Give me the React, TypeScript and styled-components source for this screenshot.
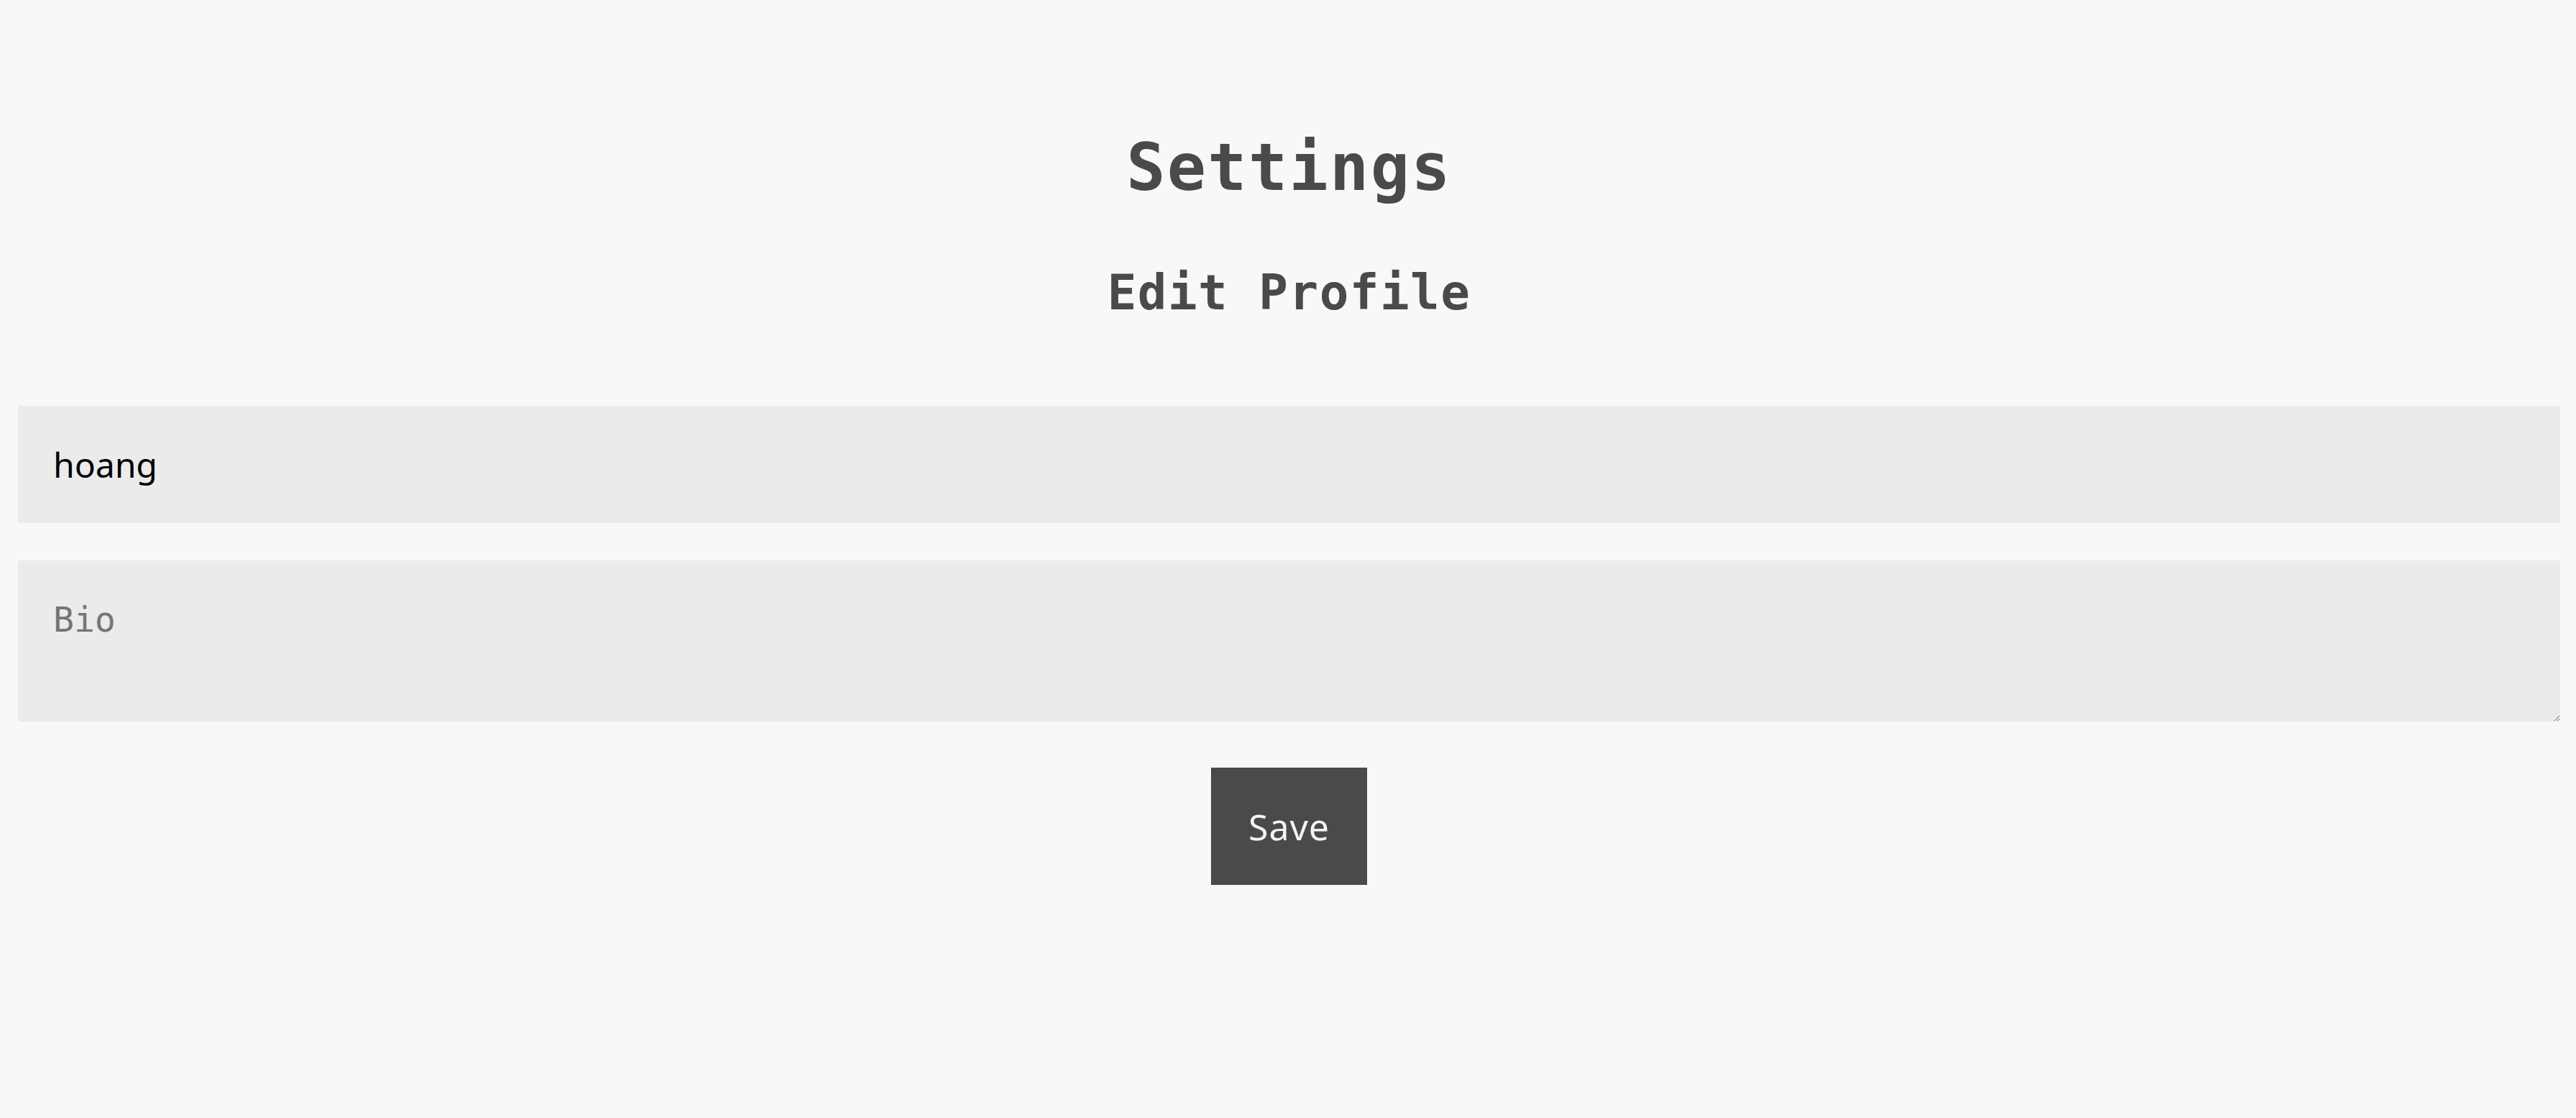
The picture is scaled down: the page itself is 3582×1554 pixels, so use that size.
import React, { useState } from "react";
import styled, { createGlobalStyle } from "styled-components";

const GlobalStyle = createGlobalStyle`
  html, body {
    margin: 0;
    padding: 0;
    background: #f8f8f8;
  }
  * { box-sizing: border-box; }
`;

const Page = styled.main`
  min-height: 1554px;
  background: #f8f8f8;
  padding: 180px 22px 0 25px;
  display: flex;
  flex-direction: column;
  align-items: stretch;
`;

const Title = styled.h1`
  margin: 0;
  text-align: center;
  font-family: "DejaVu Sans Mono", "Liberation Mono", monospace;
  font-weight: 700;
  font-size: 90px;
  line-height: 105px;
  letter-spacing: 2.4px;
  color: #4a4a4a;
`;

const Subtitle = styled.h2`
  margin: 82px 0 0;
  text-align: center;
  font-family: "DejaVu Sans Mono", "Liberation Mono", monospace;
  font-weight: 700;
  font-size: 67.5px;
  line-height: 79px;
  letter-spacing: 1.5px;
  color: #4a4a4a;
`;

const Form = styled.form`
  margin-top: 118px;
  display: flex;
  flex-direction: column;
  align-items: stretch;
`;

const TextInput = styled.input`
  height: 163px;
  border: none;
  outline: none;
  background: #ebebeb;
  padding: 0 49px;
  font-family: "Noto Sans", "Open Sans", sans-serif;
  font-size: 48px;
  color: #000;
`;

const BioArea = styled.textarea`
  margin-top: 52px;
  height: 224px;
  border: none;
  outline: none;
  background: #ebebeb;
  padding: 49px;
  font-family: "DejaVu Sans Mono", monospace;
  font-size: 48px;
  line-height: 67px;
  color: #000;
  &::placeholder {
    color: #757575;
  }
`;

const SaveButton = styled.button`
  align-self: center;
  margin-top: 64px;
  height: 163px;
  width: 217px;
  padding: 0;
  border: none;
  background: #4a4a4a;
  color: #f3f3f3;
  font-family: "Noto Sans", "Open Sans", sans-serif;
  font-size: 50px;
  letter-spacing: 1px;
  cursor: pointer;
`;

export default function App() {
  const [name, setName] = useState("hoang");
  const [bio, setBio] = useState("");
  return (
    <>
      <GlobalStyle />
      <Page>
        <Title>Settings</Title>
        <Subtitle>Edit Profile</Subtitle>
        <Form onSubmit={(e) => e.preventDefault()}>
          <TextInput value={name} onChange={(e) => setName(e.target.value)} />
          <BioArea
            placeholder="Bio"
            value={bio}
            onChange={(e) => setBio(e.target.value)}
          />
          <SaveButton type="submit">Save</SaveButton>
        </Form>
      </Page>
    </>
  );
}
